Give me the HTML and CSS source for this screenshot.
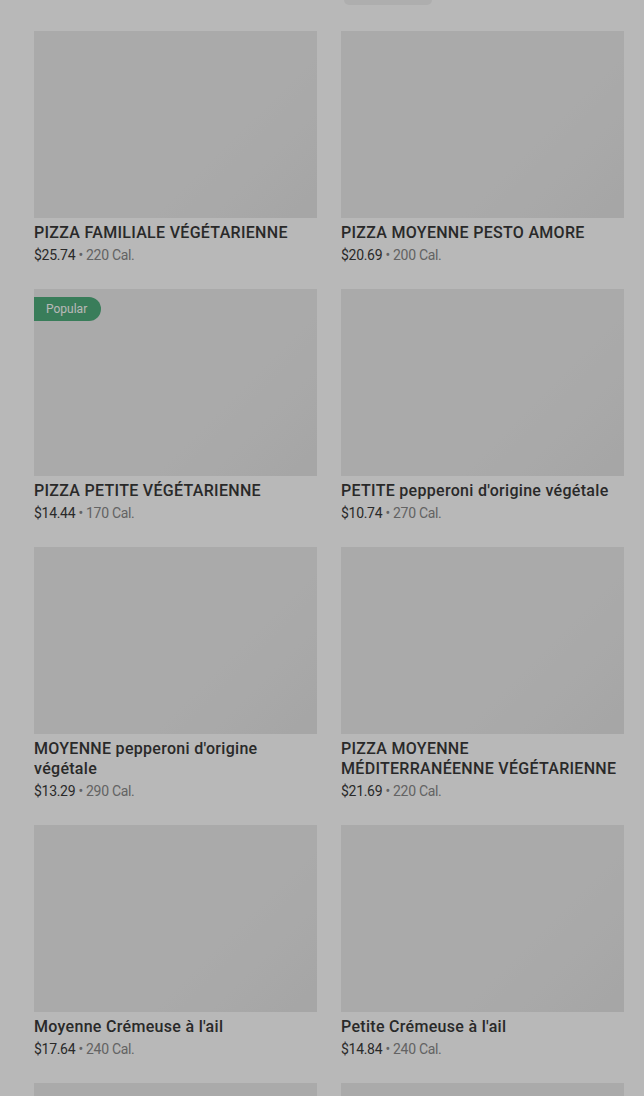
FILE: index.html
```html
<!DOCTYPE html>
<html lang="fr">
<head>
<meta charset="UTF-8" />
<meta name="viewport" content="width=device-width, initial-scale=1" />
<title>Pizzas</title>
<link rel="stylesheet" href="styles.css">
</head>
<body>
  <div class="menu">
    <!-- Bottom edge of the row above, cut off by the viewport -->
    <div class="peek">
      <div></div>
      <div class="peek-tag"></div>
    </div>

    <div class="grid">
      <div class="item">
        <div class="photo"></div>
        <div class="name">PIZZA FAMILIALE VÉGÉTARIENNE</div>
        <div class="meta"><span class="price">$25.74</span> • 220 Cal.</div>
      </div>
      <div class="item">
        <div class="photo"></div>
        <div class="name">PIZZA MOYENNE PESTO AMORE</div>
        <div class="meta"><span class="price">$20.69</span> • 200 Cal.</div>
      </div>

      <div class="item">
        <div class="photo">
          <span class="badge">Popular</span>
        </div>
        <div class="name">PIZZA PETITE VÉGÉTARIENNE</div>
        <div class="meta"><span class="price">$14.44</span> • 170 Cal.</div>
      </div>
      <div class="item">
        <div class="photo"></div>
        <div class="name">PETITE pepperoni d'origine végétale</div>
        <div class="meta"><span class="price">$10.74</span> • 270 Cal.</div>
      </div>

      <div class="item">
        <div class="photo"></div>
        <div class="name">MOYENNE pepperoni d'origine végétale</div>
        <div class="meta"><span class="price">$13.29</span> • 290 Cal.</div>
      </div>
      <div class="item">
        <div class="photo"></div>
        <div class="name">PIZZA MOYENNE MÉDITERRANÉENNE VÉGÉTARIENNE</div>
        <div class="meta"><span class="price">$21.69</span> • 220 Cal.</div>
      </div>

      <div class="item">
        <div class="photo"></div>
        <div class="name">Moyenne Crémeuse à l'ail</div>
        <div class="meta"><span class="price">$17.64</span> • 240 Cal.</div>
      </div>
      <div class="item">
        <div class="photo"></div>
        <div class="name">Petite Crémeuse à l'ail</div>
        <div class="meta"><span class="price">$14.84</span> • 240 Cal.</div>
      </div>

      <div class="item">
        <div class="photo"></div>
      </div>
      <div class="item">
        <div class="photo"></div>
      </div>
    </div>
  </div>

  <!-- Dimmed backdrop of an open dialog -->
  <div class="backdrop"></div>
</body>
</html>
```

FILE: styles.css
```css
/* Menu grid under a grey modal backdrop */

body {
  margin: 0;
  background-color: #ffffff;
  font-family: Roboto, "Noto Sans", Arial, sans-serif;
  color: #000000;
  overflow: hidden;
}

.menu {
  padding: 0 20px 0 34px;
}

/* Shared two-column grid */
.peek,
.grid {
  display: grid;
  grid-template-columns: 283px 283px;
  column-gap: 24px;
}

.peek {
  height: 5px;
  margin-bottom: 26px;
}

.peek-tag {
  width: 88px;
  height: 5px;
  margin-left: 3px;
  background-color: #f2f2f2;
  border-radius: 0 0 6px 6px;
}

.grid {
  row-gap: 24px;
}

.item {
  display: flex;
  flex-direction: column;
}

/* Image placeholder */
.photo {
  position: relative;
  height: 187px;
  background: linear-gradient(135deg, #ececec 0%, #ececec 65%, #e6e6e6 100%);
}

.badge {
  position: absolute;
  top: 8px;
  left: 0;
  padding: 0 14px 0 12px;
  height: 24px;
  line-height: 24px;
  font-size: 12px;
  color: #ffffff;
  background-color: #50ad7d;
  border-radius: 0 12px 12px 0;
}

.name {
  margin-top: 5px;
  font-size: 16px;
  font-weight: 500;
  line-height: 20px;
  color: #3a3a3a;
  letter-spacing: 0.3px;
}

.meta {
  margin-top: 2px;
  font-size: 14px;
  line-height: 20px;
  color: #8a8a8a;
  letter-spacing: -0.3px;
}

.price {
  color: #3a3a3a;
}

/* Grey overlay over the whole page */
.backdrop {
  position: fixed;
  inset: 0;
  background-color: rgba(0, 0, 0, 0.28);
}
```
